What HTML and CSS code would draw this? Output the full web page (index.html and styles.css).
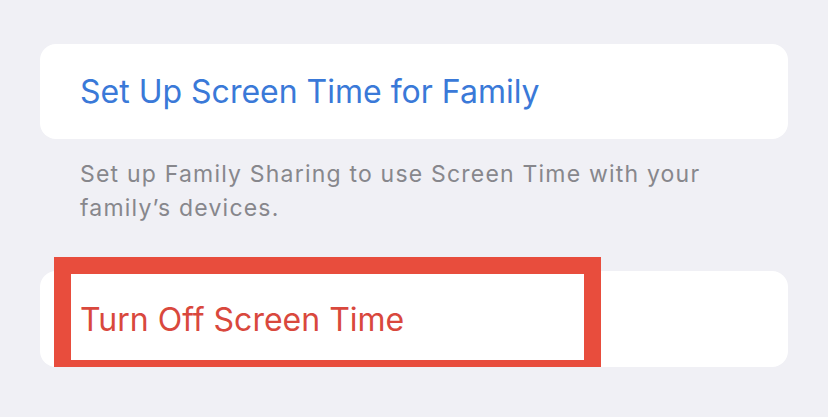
FILE: index.html
```html
<!DOCTYPE html>
<html>
  <head>
    <title>Screen Time</title>
    <link rel="stylesheet" href="styles.css">
  </head>
  <body>
    <div class="settings">
      <div class="group">
        <div class="cell cell-link">Set Up Screen Time for Family</div>
      </div>
      <p class="group-footer">Set up Family Sharing to use Screen Time with your family’s devices.</p>

      <div class="group group-last">
        <div class="cell cell-danger">Turn Off Screen Time</div>
        <div class="highlight"></div>
      </div>
    </div>
  </body>
</html>
```

FILE: styles.css
```css
/* Grouped settings list */
body {
  margin: 0;
  background-color: #f0f0f5;
  font-family: Inter, "Noto Sans", sans-serif;
}

.settings {
  padding: 44px 40px 0 40px;
}

.group {
  background-color: white;
  border-radius: 16px;
}

.group-last {
  position: relative;
  margin-top: 46px;
}

.cell {
  display: flex;
  align-items: center;
  height: 95px;
  padding-left: 40px;
  font-size: 32px;
}

.cell-link {
  color: #3a79d8;
}

.cell-danger {
  height: 96px;
  color: #d9483d;
}

.group-footer {
  margin: 18px 0 0 0;
  padding: 0 40px;
  font-size: 23px;
  line-height: 34px;
  letter-spacing: 1.2px;
  color: #87878c;
}

/* red marker drawn over the row */
.highlight {
  position: absolute;
  left: 14px;
  top: -14px;
  width: 513px;
  height: 86px;
  border: 17px solid #e84d3d;
}
```
